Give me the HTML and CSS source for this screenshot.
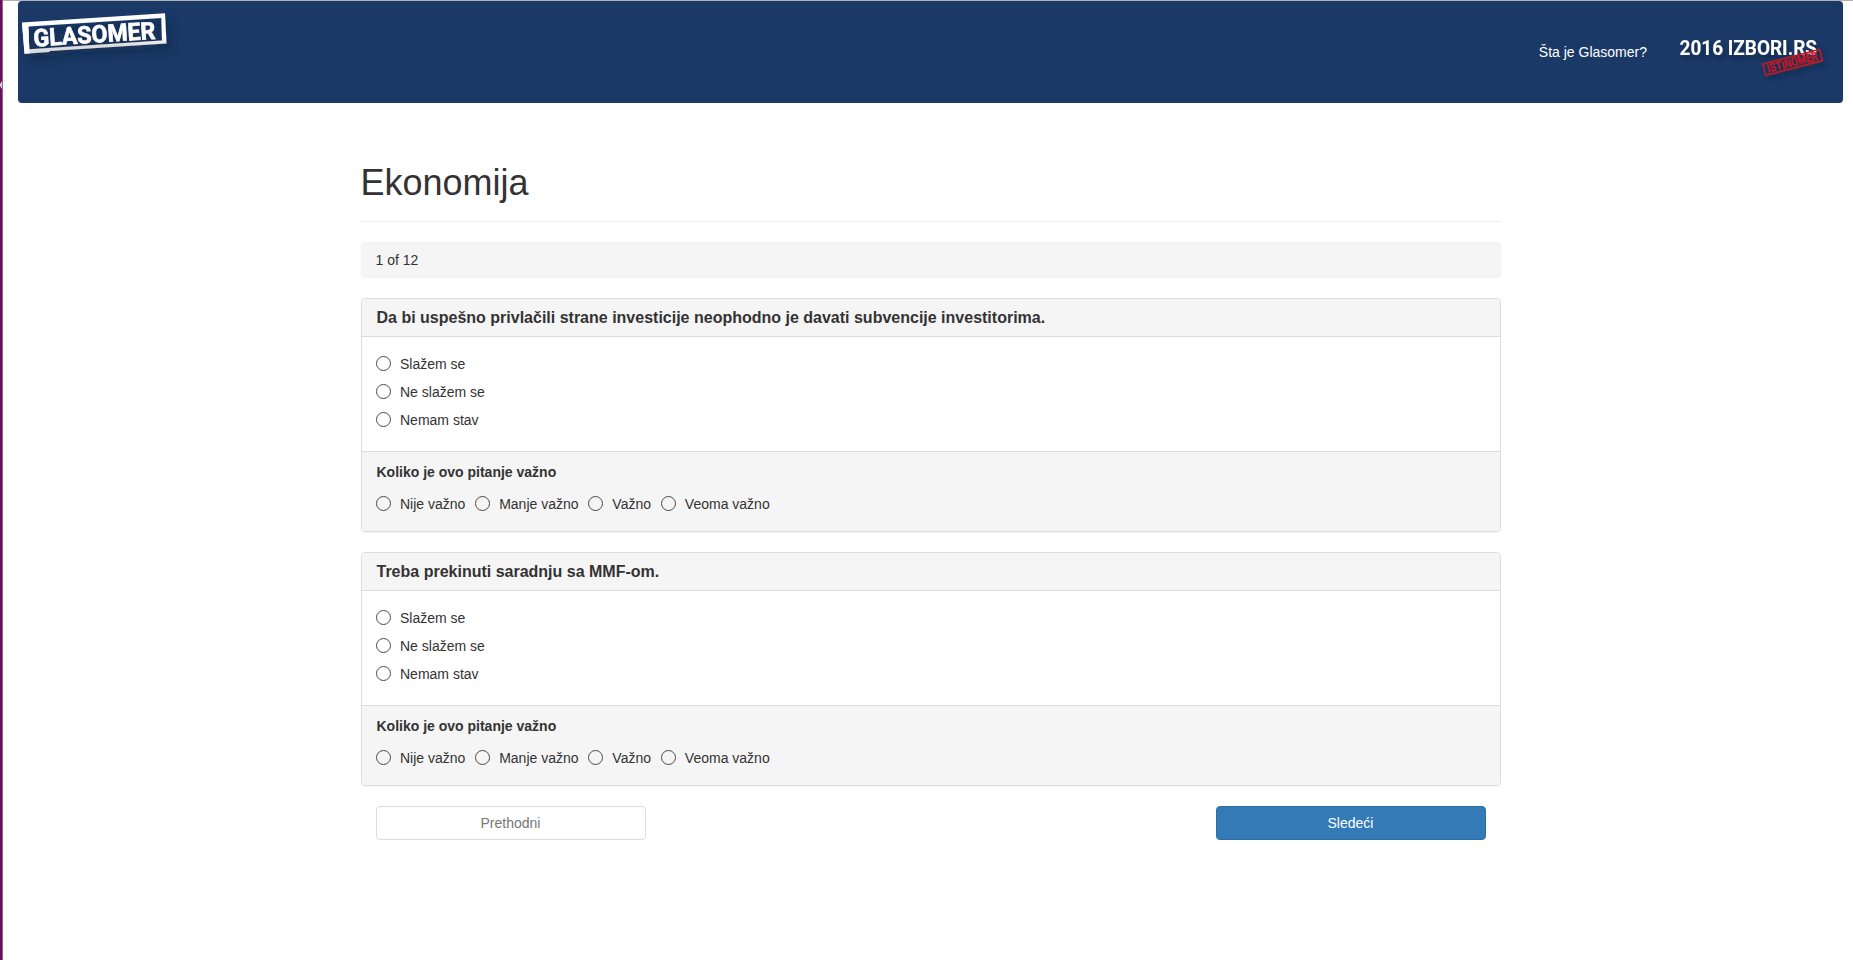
FILE: index.html
```html
<!DOCTYPE html>
<html lang="sr">
<head>
<meta charset="utf-8">
<title>Glasomer</title>
<link rel="stylesheet" href="styles.css">
</head>
<body>
<div class="launcher-edge"><svg class="edge-arrow" width="2" height="8" viewBox="0 0 2 8"><path d="M2 0v8L0 5V3z" fill="#d8d4d6"/></svg></div>
<div class="page">
  <header class="navbar">
    <svg class="brand" width="170" height="80" viewBox="0 0 170 80" role="img" aria-label="Glasomer">
      <defs>
        <filter id="shadow" x="-20%" y="-40%" width="150%" height="200%"><feDropShadow dx="6" dy="7" stdDeviation="4" flood-color="#10233f" flood-opacity=".65"/></filter>
        <linearGradient id="fade" x1="0" y1="0" x2="0" y2="1"><stop offset=".6" stop-color="#fff"/><stop offset=".8" stop-color="#dcdcde"/></linearGradient>
      </defs>
      <g filter="url(#shadow)">
        <path fill="url(#fade)" fill-rule="evenodd" d="M4 21.500 L147 12.300 L148.500 42.600 L32 50 L31 51 L6.500 52.700 Z M10.300 25.500 L143.300 17 L144 39.500 L11.300 48.300 Z"/>
        <path fill="#fff" d="M4 21.500L10.300 25L11.300 48.300L12 52.300L6.500 52.700Z"/>
        <text class="brand-text" transform="translate(16 45.500) rotate(-3.600)" textLength="122" lengthAdjust="spacingAndGlyphs">GLASOMER</text>
      </g>
    </svg>
    <nav class="nav">
      <a class="nav-link">Šta je Glasomer?</a>
      <svg class="partner" width="160" height="60" viewBox="0 0 160 60" role="img" aria-label="2016 izbori.rs istinomer">
        <defs><filter id="soft" x="-10%" y="-30%" width="130%" height="200%"><feDropShadow dx="3" dy="4" stdDeviation="2" flood-color="#10233f" flood-opacity=".7"/></filter></defs>
        <g filter="url(#soft)">
          <text class="partner-text" x="9.500" y="33" textLength="137.500" lengthAdjust="spacingAndGlyphs">2016 IZBORI.RS</text>
          <g transform="translate(92 41.600) rotate(-14.500)">
            <rect class="stamp" x=".7" y=".7" width="58.600" height="11.600"/>
            <text class="stamp-text" x="4" y="10.500" textLength="52" lengthAdjust="spacingAndGlyphs">IST<tspan dy="1.500">I</tspan><tspan dy="-1.500">NOMER</tspan></text>
          </g>
        </g>
      </svg>
    </nav>
  </header>
  <main class="container">
    <h1 class="title">Ekonomija</h1>
    <div class="progress">1 of 12</div>
    <section class="panel">
      <h3 class="panel-heading">Da bi uspešno privlačili strane investicije neophodno je davati subvencije investitorima.</h3>
      <div class="panel-body">
        <label class="radio"><i class="dot"></i>Slažem se</label>
        <label class="radio"><i class="dot"></i>Ne slažem se</label>
        <label class="radio"><i class="dot"></i>Nemam stav</label>
      </div>
      <div class="panel-footer">
        <strong class="importance">Koliko je ovo pitanje važno</strong>
        <div class="inline-radios">
          <label class="radio"><i class="dot"></i>Nije važno</label>
          <label class="radio"><i class="dot"></i>Manje važno</label>
          <label class="radio"><i class="dot"></i>Važno</label>
          <label class="radio"><i class="dot"></i>Veoma važno</label>
        </div>
      </div>
    </section>
    <section class="panel">
      <h3 class="panel-heading">Treba prekinuti saradnju sa MMF-om.</h3>
      <div class="panel-body">
        <label class="radio"><i class="dot"></i>Slažem se</label>
        <label class="radio"><i class="dot"></i>Ne slažem se</label>
        <label class="radio"><i class="dot"></i>Nemam stav</label>
      </div>
      <div class="panel-footer">
        <strong class="importance">Koliko je ovo pitanje važno</strong>
        <div class="inline-radios">
          <label class="radio"><i class="dot"></i>Nije važno</label>
          <label class="radio"><i class="dot"></i>Manje važno</label>
          <label class="radio"><i class="dot"></i>Važno</label>
          <label class="radio"><i class="dot"></i>Veoma važno</label>
        </div>
      </div>
    </section>
    <div class="actions">
      <button class="btn btn-default">Prethodni</button>
      <button class="btn btn-primary">Sledeći</button>
    </div>
  </main>
</div>
</body>
</html>
```
FILE: styles.css
```css
* { box-sizing: border-box; }
body {
  margin: 0;
  display: flex;
  height: 960px;
  overflow: hidden;
  background: #fff;
  color: #333;
  font: 14px/20px "Liberation Sans", Arial, sans-serif;
}
.launcher-edge {
  width: 3px;
  padding-top: 81px;
  background: #6a1058;
  border-right: 1px solid #9a6090;
}
.edge-arrow { display: block; }
.page {
  flex: 1;
  border-top: 1px solid #b3b1b2;
  padding: 0 10px 0 15px;
}
.navbar {
  display: flex;
  justify-content: space-between;
  height: 102px;
  border-radius: 4px;
  background: #1b3967;
}
.brand-text {
  font: 700 24px Roboto, sans-serif;
  fill: #fff;
  stroke: #fff;
  stroke-width: .6px;
}
.nav { display: flex; padding: 21px 13px 0 0; }
.nav-link { padding: 20px 23px 0 0; color: #fff; }
.partner-text { font: 700 19.500px Roboto, sans-serif; fill: #fff; }
.stamp { fill: none; stroke: #c9151e; stroke-width: 1.500px; }
.stamp-text {
  font: 700 12px Roboto, sans-serif;
  fill: #c9151e;
  stroke: #c9151e;
  stroke-width: .3px;
}
.container { width: 1140px; margin: 0 0 0 342.5px; }
.title {
  height: 119px;
  margin: 0 0 20px;
  padding-top: 60px;
  border-bottom: 1px solid #eee;
  font-size: 36px;
  line-height: 40px;
  font-weight: 400;
}
.progress {
  height: 36px;
  margin-bottom: 20px;
  padding: 8px 15px;
  border-radius: 4px;
  background: #f5f5f5;
}
.panel {
  height: 234px;
  margin-bottom: 20px;
  border: 1px solid #ddd;
  border-radius: 4px;
  box-shadow: 0 1px 1px rgba(0, 0, 0, .05);
  overflow: hidden;
}
.panel-heading {
  height: 38px;
  margin: 0;
  padding: 10px 15px;
  border-bottom: 1px solid #ddd;
  background: #f5f5f5;
  font-size: 16px;
  line-height: 18px;
}
.panel-body {
  display: flex;
  flex-direction: column;
  gap: 8px;
  height: 114px;
  padding: 17px 15px;
}
.panel-footer {
  height: 80px;
  padding: 10px 15px;
  border-top: 1px solid #ddd;
  background: #f5f5f5;
}
.importance { display: block; }
.inline-radios { display: flex; gap: 10.3px; margin-top: 12px; }
.radio { display: flex; height: 20px; white-space: nowrap; }
.dot {
  width: 15px;
  height: 15px;
  margin: 1.5px 9px 0 -.5px;
  border: 1.2px solid #4a4a4a;
  border-radius: 50%;
}
.actions { display: flex; justify-content: space-between; padding: 0 15px; }
.btn {
  width: 270px;
  height: 34px;
  padding: 0;
  border: 1px solid #ddd;
  border-radius: 4px;
  background: #fff;
  color: #777;
  font: inherit;
}
.btn-primary { border-color: #2e6da4; background: #337ab7; color: #fff; }
```
